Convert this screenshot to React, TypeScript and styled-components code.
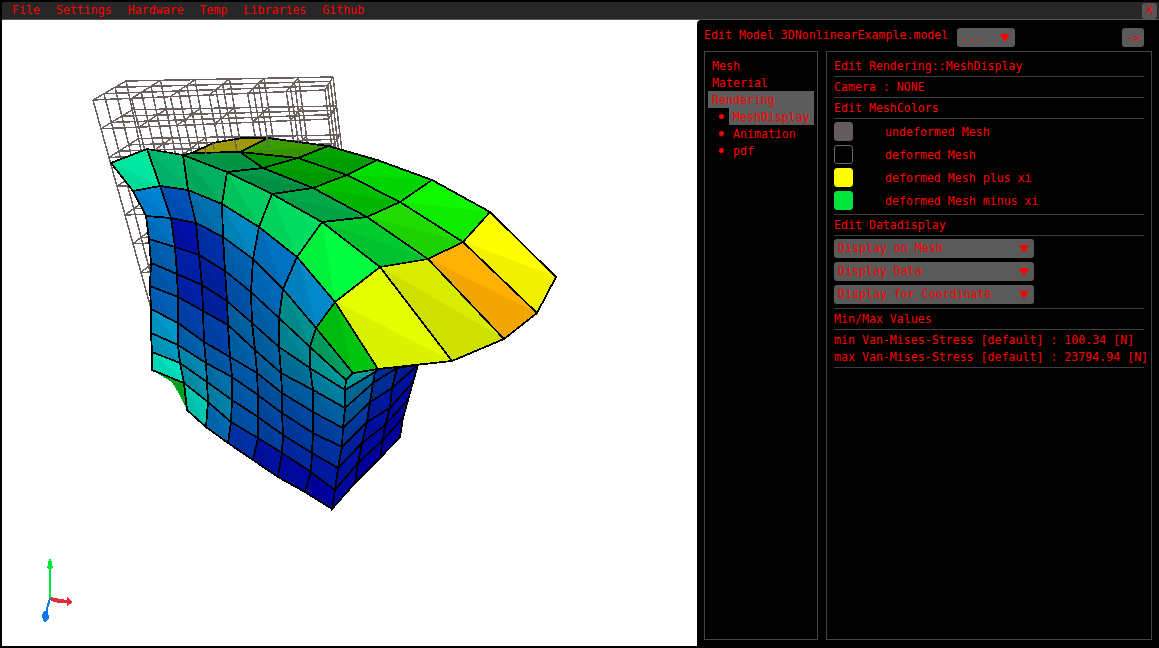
import React from 'react';
import styled, { createGlobalStyle } from 'styled-components';

type Pt = [number, number];

const GlobalStyle = createGlobalStyle`
  html, body {
    margin: 0;
    padding: 0;
    height: 100%;
    background: #000;
    overflow: hidden;
  }
  body {
    font-family: "DejaVu Sans Mono", "Liberation Mono", monospace;
    font-size: 11.6px;
    color: #f00;
  }
`;

const Page = styled.div`
  width: 1159px;
  height: 648px;
  padding: 2px 0 0 2px;
  box-sizing: border-box;
  display: flex;
  flex-direction: column;
  background: #000;
`;

const MenuBar = styled.div`
  height: 17px;
  flex: none;
  display: flex;
  align-items: center;
  gap: 16px;
  padding-left: 10px;
  background: #272727;
  border-bottom: 1px solid #555;
  position: relative;
`;

const MenuItem = styled.span`
  line-height: 17px;
`;

const CloseButton = styled.div`
  position: absolute;
  right: 2px;
  top: 1px;
  width: 15px;
  height: 16px;
  background: #555;
  border-radius: 3px;
  text-align: center;
  line-height: 15px;
`;

const Stage = styled.div`
  flex: 1;
  display: flex;
  min-height: 0;
  background: #fff;
`;

const Viewport = styled.div`
  width: 695px;
  height: 628px;
  flex: none;
  box-sizing: border-box;
  border-bottom: 2px solid #000;
  background: #fff;
`;

const Canvas = styled.svg`
  display: block;
`;

const Panel = styled.div`
  width: 462px;
  height: 628px;
  flex: none;
  box-sizing: border-box;
  padding: 8px 7px;
  background: #000;
  border-top-left-radius: 4px;
  display: flex;
  flex-direction: column;
`;

const PanelHead = styled.div`
  height: 19px;
  display: flex;
  align-items: center;
  flex: none;
`;

const Title = styled.span`
  width: 253px;
  flex: none;
  align-self: flex-start;
  line-height: 14px;
`;

const Combo = styled.div<{ $width: number }>`
  width: ${(p) => p.$width}px;
  height: 19px;
  flex: none;
  box-sizing: border-box;
  padding: 0 5px 0 4px;
  background: #5a5a5a;
  border-radius: 3px;
  display: flex;
  align-items: center;
  justify-content: space-between;
  line-height: 21px;
`;

const Arrow = styled.i`
  display: block;
  width: 0;
  height: 0;
  border-left: 5px solid transparent;
  border-right: 5px solid transparent;
  border-top: 8px solid #f00;
`;

const ArrowButton = styled.div`
  width: 22px;
  height: 19px;
  margin-left: 107px;
  background: #5a5a5a;
  border-radius: 3px;
  text-align: center;
  line-height: 21px;
`;

const Columns = styled.div`
  flex: 1;
  margin-top: 4px;
  display: flex;
  gap: 8px;
  min-height: 0;
`;

const NavBox = styled.div`
  width: 114px;
  flex: none;
  box-sizing: border-box;
  border: 1px solid #444;
  padding: 5px 3px;
  display: flex;
  flex-direction: column;
`;

const NavRow = styled.div<{ $active?: boolean }>`
  height: 17px;
  line-height: 18px;
  padding-left: 4px;
  background: ${(p) => (p.$active ? '#5c5c5c' : 'transparent')};
`;

const SubRow = styled.div`
  height: 17px;
  display: flex;
  align-items: center;
  padding-left: 11px;
`;

const Bullet = styled.i`
  display: block;
  width: 5px;
  height: 5px;
  border-radius: 50%;
  background: #f00;
  flex: none;
`;

const SubLabel = styled.span<{ $active?: boolean }>`
  margin-left: 5px;
  flex: 1;
  height: 17px;
  line-height: 18px;
  padding-left: 4px;
  background: ${(p) => (p.$active ? '#5c5c5c' : 'transparent')};
`;

const MainBox = styled.div`
  width: 326px;
  flex: none;
  box-sizing: border-box;
  border: 1px solid #444;
  padding: 4px 7px;
  display: flex;
  flex-direction: column;
`;

const Heading = styled.div`
  height: 20px;
  line-height: 20px;
  flex: none;
  border-bottom: 1px solid #3c3c44;
`;

const Swatches = styled.div`
  display: flex;
  flex-direction: column;
  gap: 4px;
  padding: 3px 0 4px;
  border-bottom: 1px solid #3c3c44;
`;

const SwatchRow = styled.div`
  height: 19px;
  line-height: 20px;
  display: flex;
  align-items: center;
`;

const Swatch = styled.div<{ $color: string }>`
  width: 19px;
  height: 19px;
  flex: none;
  box-sizing: border-box;
  border-radius: 3px;
  background: ${(p) => p.$color};
  border: 1px solid ${(p) => (p.$color === '#000' ? '#6a6a6a' : p.$color)};
  margin-right: 32px;
`;

const Selects = styled.div`
  display: flex;
  flex-direction: column;
  gap: 4px;
  padding: 3px 0 4px;
  border-bottom: 1px solid #3c3c44;
`;

const Values = styled.div`
  padding: 2px 0 1px;
  border-bottom: 1px solid #3c3c44;
`;

const ValueRow = styled.div`
  height: 17px;
  line-height: 17px;
  white-space: nowrap;
`;

// left face of the mesh, row by row
const face: Pt[][] = [
  [[111, 163], [147, 149], [183, 155], [227, 172], [272, 194], [322, 222], [380, 267]],
  [[133, 191], [160, 186], [188, 190], [222, 204], [259, 227], [297, 257], [335, 302], [378, 369]],
  [[146, 216], [171, 218], [196, 223], [223, 237], [253, 259], [283, 289], [316, 328], [353, 373]],
  [[149, 239], [175, 247], [199, 255], [225, 271], [251, 292], [279, 318], [310, 347], [346, 380]],
  [[151, 263], [177, 274], [202, 285], [227, 301], [252, 323], [279, 347], [310, 368], [345, 390]],
  [[150, 286], [178, 297], [203, 311], [228, 325], [255, 350], [281, 373], [313, 390], [345, 408]],
  [[151, 309], [178, 323], [204, 342], [230, 357], [257, 373], [282, 393], [313, 412], [343, 428]],
  [[151, 333], [178, 345], [206, 363], [232, 377], [258, 395], [282, 413], [313, 433], [342, 447]],
  [[152, 352], [180, 363], [207, 382], [232, 400], [258, 417], [283, 435], [312, 453], [338, 468]],
  [[152, 370], [184, 383], [208, 402], [231, 422], [258, 438], [282, 453], [311, 472], [335, 490]],
  [[172, 382], [187, 410], [206, 427], [228, 443], [253, 460], [278, 477], [305, 492], [332, 509]],
];

const faceColors: string[][] = [
  ['#00e8a0', '#00b870', '#00b060', '#00cc60', '#00dd60', '#00ff40'],
  ['#0080d0', '#0050b8', '#0070b0', '#0088c0', '#0070c0', '#0088c8', '#00c410'],
  ['#0070c0', '#0010a8', '#0030a8', '#0060b0', '#0068b8', '#009090', '#00a060'],
  ['#0060b0', '#0020a8', '#0020a0', '#0050a8', '#0060a8', '#008898', '#009898'],
  ['#0058b0', '#0020a8', '#0020a0', '#0060a0', '#0060a0', '#007098', '#0080a0'],
  ['#0060b8', '#0040a8', '#0040a8', '#0060a8', '#0060a0', '#005ca0', '#0060a0'],
  ['#0098c8', '#0060b0', '#0058a8', '#0058a8', '#0050a0', '#0048a0', '#0040a0'],
  ['#0098c0', '#0088b0', '#0070a8', '#0058a8', '#0048a0', '#0038a0', '#0030a0'],
  ['#00e0c0', '#0090a8', '#0080a8', '#0050a8', '#0040a0', '#0028a0', '#0018a0'],
  ['', '#00c8b0', '#0068b0', '#0030a8', '#0010a0', '#0008a0', '#0000a0'],
];

type Cell = { pts: Pt[]; color: string };

// underside on the right, drawn first so the yellow end lies over it
const sideRows: Pt[][] = [
  [[345, 390], [375, 372], [375, 372], [375, 372]],
  [[345, 408], [373, 383], [397, 368], [397, 368]],
  [[343, 428], [370, 402], [392, 388], [418, 365]],
  [[342, 447], [367, 422], [390, 408], [413, 382]],
  [[338, 468], [362, 443], [385, 425], [408, 400]],
  [[335, 490], [358, 463], [383, 440], [403, 418]],
  [[332, 509], [355, 483], [380, 458], [400, 437]],
];

const sideColors: string[][] = [
  ['#006898', '#003898', '#003090'],
  ['#005098', '#002c98', '#001c98'],
  ['#0038a0', '#0018a0', '#0010a0'],
  ['#0020a0', '#0010a0', '#0008a0'],
  ['#0010a0', '#0008a0', '#0000a0'],
  ['#0008a0', '#0000a0', '#0000a0'],
];

const sideExtra: Cell[] = [
  { pts: [[346, 380], [353, 373], [378, 369], [375, 372], [345, 390]], color: '#00a0a0' },
  { pts: [[375, 372], [378, 369], [418, 365], [397, 368], [373, 383]], color: '#003098' },
];

const topCells: Cell[] = [
  { pts: [[192, 153], [213, 143], [243, 138], [268, 138], [240, 152]], color: '#a8a000' },
  { pts: [[183, 155], [192, 153], [240, 152], [263, 168], [227, 172]], color: '#009c48' },
  { pts: [[240, 152], [268, 138], [328, 146], [298, 158]], color: '#3a9c00' },
  { pts: [[240, 152], [298, 158], [263, 168]], color: '#009000' },
  { pts: [[227, 172], [263, 168], [313, 188], [272, 194]], color: '#009848' },
  { pts: [[263, 168], [298, 158], [347, 175], [313, 188]], color: '#00a000' },
  { pts: [[298, 158], [328, 146], [377, 160], [347, 175]], color: '#00a400' },
  { pts: [[272, 194], [313, 188], [367, 217], [322, 222]], color: '#00a848' },
  { pts: [[313, 188], [347, 175], [400, 202], [367, 217]], color: '#00c000' },
  { pts: [[347, 175], [377, 160], [432, 180], [400, 202]], color: '#00e000' },
  { pts: [[322, 222], [367, 217], [428, 259], [380, 267]], color: '#00cc30' },
  { pts: [[367, 217], [400, 202], [463, 242], [428, 259]], color: '#20dc00' },
  { pts: [[400, 202], [432, 180], [490, 212], [463, 242]], color: '#10f800' },
  { pts: [[335, 302], [380, 267], [452, 361], [378, 369]], color: '#e4ff00' },
  { pts: [[380, 267], [428, 259], [504, 339], [452, 361]], color: '#d8ec00' },
  { pts: [[428, 259], [463, 242], [537, 313], [504, 339]], color: '#ffb000' },
  { pts: [[463, 242], [490, 212], [556, 277], [537, 313]], color: '#ffff00' },
];

const darken = (hex: string, k: number) => {
  const n = parseInt(hex.slice(1), 16);
  const c = [(n >> 16) & 255, (n >> 8) & 255, n & 255].map((v) => Math.round(v * k));
  return `rgb(${c[0]},${c[1]},${c[2]})`;
};

const toPoints = (pts: Pt[]) => pts.map((p) => p.join(',')).join(' ');

function MeshCell({ pts, color }: Cell) {
  // flat shaded, so every quad shows as two slightly different triangles
  const rest = pts.slice(1);
  const shades = rest.slice(0, -1).map((p, i) => [pts[0], p, rest[i + 1]] as Pt[]);
  return (
    <g>
      {shades.map((tri, i) => {
        const fill = i === 0 ? color : darken(color, 0.95);
        return <polygon key={i} points={toPoints(tri)} fill={fill} stroke={fill} strokeWidth={0.6} />;
      })}
      <polygon points={toPoints(pts)} fill="none" stroke="#000" strokeWidth={1.8} />
    </g>
  );
}

const lerp = (a: Pt, b: Pt, t: number): Pt => [a[0] + (b[0] - a[0]) * t, a[1] + (b[1] - a[1]) * t];

const wirePoint = (i: number, j: number, k: number): Pt => {
  const top = lerp(lerp([93, 100], [325, 90], i / 6), lerp([126, 81], [333, 77], i / 6), j / 3);
  const bottom = lerp(lerp([157, 330], [353, 322], i / 6), lerp([176, 311], [361, 309], i / 6), j / 3);
  return lerp(top, bottom, k / 8);
};

function Wireframe() {
  const lines: [Pt, Pt][] = [];
  for (let i = 0; i <= 6; i++) {
    for (let j = 0; j <= 3; j++) {
      for (let k = 0; k <= 8; k++) {
        if (i < 6) lines.push([wirePoint(i, j, k), wirePoint(i + 1, j, k)]);
        if (j < 3) lines.push([wirePoint(i, j, k), wirePoint(i, j + 1, k)]);
        if (k < 8) lines.push([wirePoint(i, j, k), wirePoint(i, j, k + 1)]);
      }
    }
  }
  return (
    <g stroke="#6a6060" strokeWidth={1.5}>
      {lines.map(([a, b], i) => (
        <line key={i} x1={a[0]} y1={a[1]} x2={b[0]} y2={b[1]} />
      ))}
    </g>
  );
}

const wireTicks: [Pt, Pt][] = [
  [[205, 148], [206, 155]],
  [[213, 143], [214, 149]],
  [[235, 140], [237, 151]],
  [[267, 137], [268, 148]],
  [[298, 138], [299, 144]],
];

function Mesh() {
  const cells: Cell[] = [];
  faceColors.forEach((row, r) => {
    row.forEach((color, c) => {
      if (!color) return;
      cells.push({ pts: [face[r][c], face[r][c + 1], face[r + 1][c + 1], face[r + 1][c]], color });
    });
  });
  const side: Cell[] = [];
  sideColors.forEach((row, r) => {
    row.forEach((color, c) => {
      side.push({ pts: [sideRows[r][c], sideRows[r][c + 1], sideRows[r + 1][c + 1], sideRows[r + 1][c]], color });
    });
  });
  return (
    <g shapeRendering="crispEdges">
      <Wireframe />
      {side.map((cell, i) => <MeshCell key={i} {...cell} />)}
      {sideExtra.map((cell, i) => <MeshCell key={i} {...cell} />)}
      <polygon points="152,370 184,383 187,410 178,392 172,382" fill="#00a020" />
      {cells.map((cell, i) => <MeshCell key={i} {...cell} />)}
      {topCells.map((cell, i) => <MeshCell key={i} {...cell} />)}
      <g stroke="#6a6060" strokeWidth={1.5}>
        {wireTicks.map(([a, b], i) => (
          <line key={i} x1={a[0]} y1={a[1]} x2={b[0]} y2={b[1]} />
        ))}
      </g>
    </g>
  );
}

function Axes() {
  return (
    <g shapeRendering="crispEdges">
      <line x1={50} y1={565} x2={50} y2={598} stroke="#00e63c" strokeWidth={2} />
      <polygon points="49,559 51,559 53,568 51,569 49,569 47,568" fill="#00e63c" />
      <line x1={50} y1={598} x2={46} y2={613} stroke="#0a78e6" strokeWidth={2} />
      <polygon points="44,611 48,611 49,618 45,623 43,621 42,615" fill="#0a78e6" />
      <polygon points="51,597 60,599 67,600 67,597 73,602 67,606 67,603 59,603 51,601" fill="#e62a3a" />
    </g>
  );
}

const menus = ['File', 'Settings', 'Hardware', 'Temp', 'Libraries', 'Github'];

const colorRows = [
  { color: '#645c5c', label: 'undeformed Mesh' },
  { color: '#000', label: 'deformed Mesh' },
  { color: '#ffff00', label: 'deformed Mesh plus xi' },
  { color: '#00e63c', label: 'deformed Mesh minus xi' },
];

const displaySelects = ['Display on Mesh', 'Display Data', 'Display for Coordinate'];

export default function App() {
  return (
    <Page>
      <GlobalStyle />
      <MenuBar>
        {menus.map((m) => <MenuItem key={m}>{m}</MenuItem>)}
        <CloseButton>X</CloseButton>
      </MenuBar>
      <Stage>
        <Viewport>
          <Canvas width={695} height={626} viewBox="2 20 695 626">
            <Mesh />
            <Axes />
          </Canvas>
        </Viewport>
        <Panel>
          <PanelHead>
            <Title>Edit Model 3DNonlinearExample.model</Title>
            <Combo $width={58}>
              <span>...</span>
              <Arrow />
            </Combo>
            <ArrowButton>-&gt;</ArrowButton>
          </PanelHead>
          <Columns>
            <NavBox>
              <NavRow>Mesh</NavRow>
              <NavRow>Material</NavRow>
              <NavRow $active>Rendering</NavRow>
              <SubRow><Bullet /><SubLabel $active>MeshDisplay</SubLabel></SubRow>
              <SubRow><Bullet /><SubLabel>Animation</SubLabel></SubRow>
              <SubRow><Bullet /><SubLabel>pdf</SubLabel></SubRow>
            </NavBox>
            <MainBox>
              <Heading>Edit Rendering::MeshDisplay</Heading>
              <Heading>Camera : NONE</Heading>
              <Heading>Edit MeshColors</Heading>
              <Swatches>
                {colorRows.map((r) => (
                  <SwatchRow key={r.label}>
                    <Swatch $color={r.color} />
                    {r.label}
                  </SwatchRow>
                ))}
              </Swatches>
              <Heading>Edit Datadisplay</Heading>
              <Selects>
                {displaySelects.map((s) => (
                  <Combo key={s} $width={200}>
                    <span>{s}</span>
                    <Arrow />
                  </Combo>
                ))}
              </Selects>
              <Heading>Min/Max Values</Heading>
              <Values>
                <ValueRow>min Van-Mises-Stress [default] : 100.34 [N]</ValueRow>
                <ValueRow>max Van-Mises-Stress [default] : 23794.94 [N]</ValueRow>
              </Values>
            </MainBox>
          </Columns>
        </Panel>
      </Stage>
    </Page>
  );
}
